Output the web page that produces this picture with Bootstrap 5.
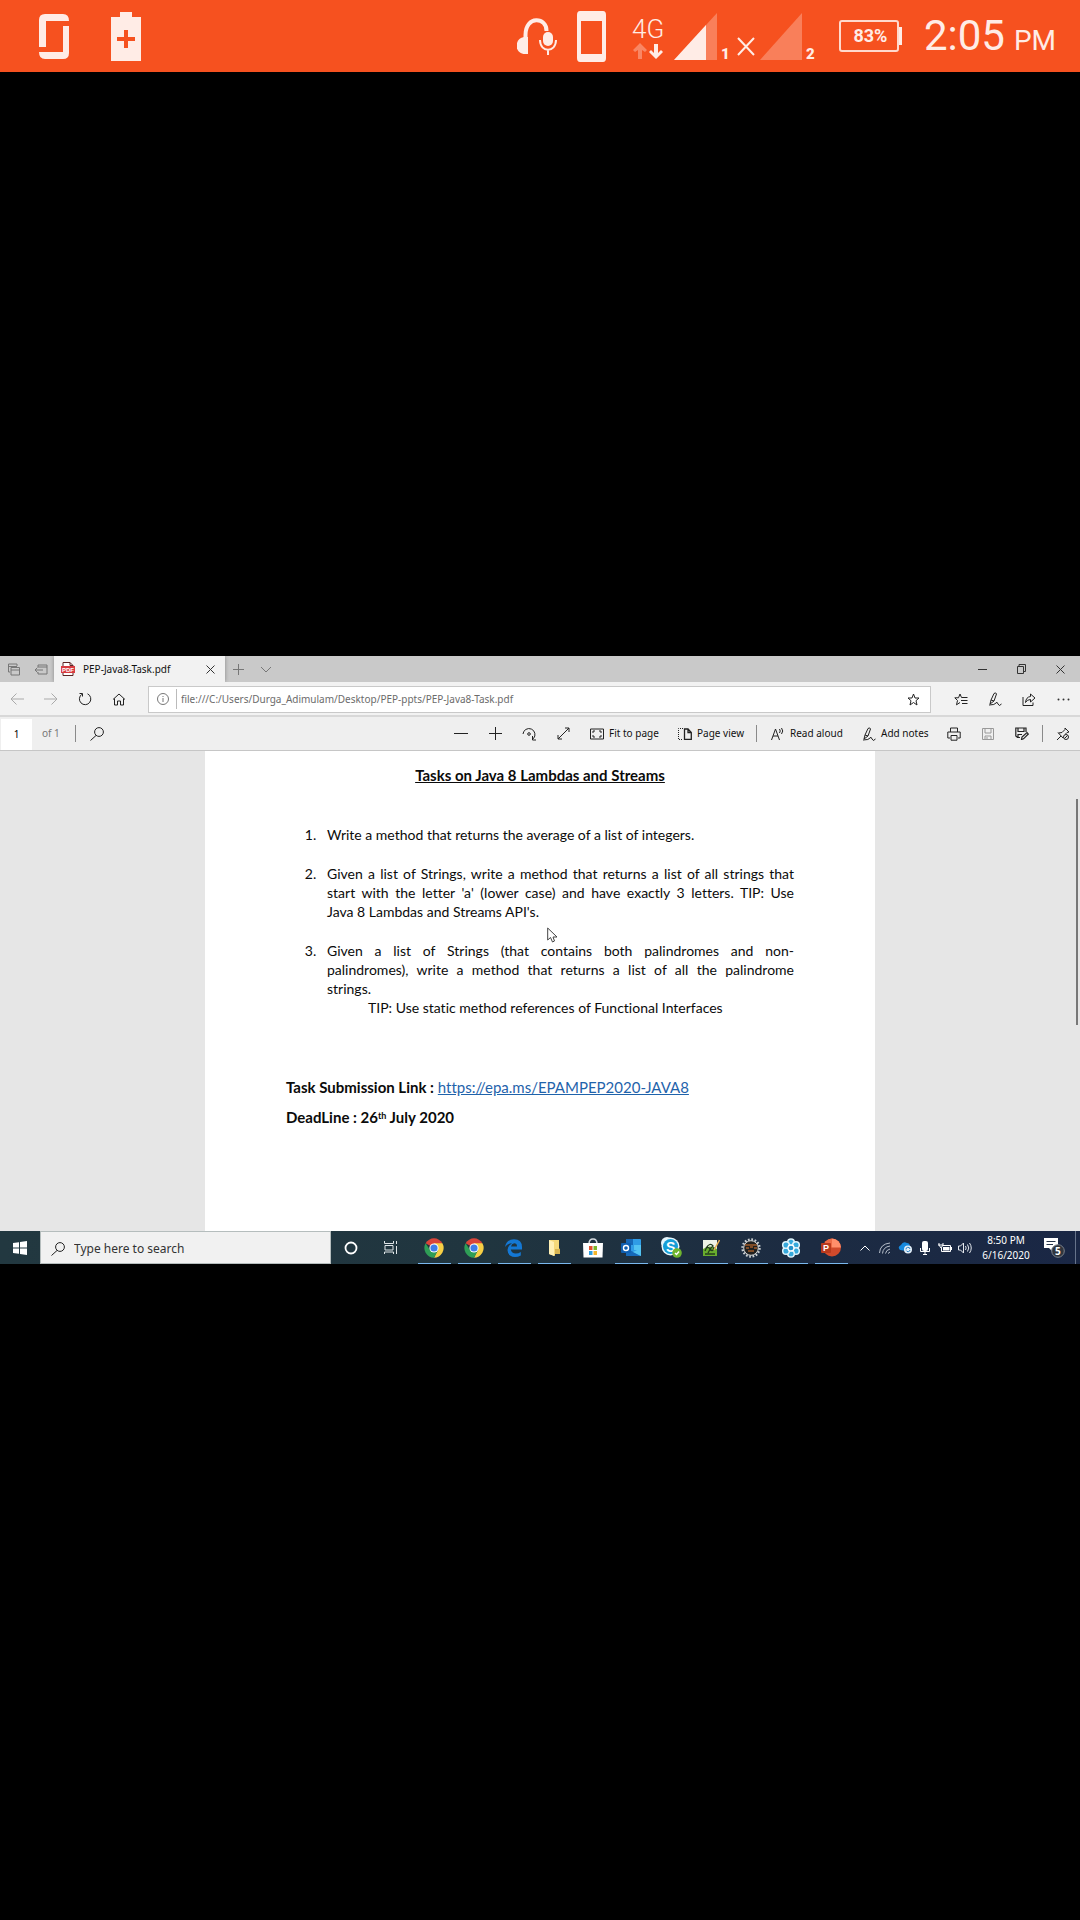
<!DOCTYPE html>
<html lang="en">
<head>
<meta charset="utf-8">
<meta name="viewport" content="width=device-width, initial-scale=1">
<title>PEP-Java8-Task.pdf</title>
<link rel="stylesheet" href="https://cdn.jsdelivr.net/npm/bootstrap@5.3.0/dist/css/bootstrap.min.css">
<style>
body{background:#000;font-family:"Noto Sans","Open Sans",sans-serif;color:#111}
svg{display:block;flex:none}
button{border:0;background:none;padding:0;color:inherit}
.phone-bar{height:72px;background:#f6511f;color:#ffece6;font-family:Roboto,sans-serif;padding:0 24px 0 39px}
.phone-left{gap:42px}
.charge{width:60px;height:32px;border:2px solid #ffd9cc;border-radius:3px;font-size:18px;font-weight:700;line-height:28px;margin-left:23px;padding-left:3px}
.charge-tip{width:3px;height:18px;background:#ffece6;margin-right:22px}
.clock-time{font-size:42px;line-height:50px}
.clock-half{font-size:28px;line-height:40px;margin-left:9px}
.cast{background:#e6e6e6}
.tabs-row{height:26px;background:#c9c9c9;color:#777}
.tile{display:flex;align-items:center;justify-content:center;width:34px;height:100%;flex:none}
.tile-tab{width:27px}
.tile-win{width:39px;color:#333}
.open-tab{width:171px;background:#f2f2f2;color:#111;font-size:10px;padding:0 6px 0 7px;box-shadow:0 0 4px #888;clip-path:inset(0 -4px 0 -4px)}
.nav-row{height:35px;background:#f2f2f2;border-bottom:2px solid #d8d8d8;padding-top:1px}
.url-box{height:27px;background:#fff;border:1px solid #c9c9c9;margin:0 13px 0 12px;color:#777}
.url-box input,.find-box input{border:0;background:none;outline:0;min-width:0;padding:0}
.url-box input{font-size:10px;color:#6b6b6b;padding-left:4px}
.url-rule{width:1px;height:20px;background:#bbb}
.pdf-row{height:34px;background:#efefef;border-bottom:1px solid #c6c6c6;font-size:10px}
.page-no{width:31px;height:31px;border:0;background:#fff;text-align:center;font-size:10px;margin:1px 10px 0 1px;padding:0}
.of-total{font-size:10px;color:#777;width:33px}
.rule{width:1px;height:17px;background:#8a8a8a;flex:none}
.rule-pin{margin:0 3px}
.word-btn{display:flex;align-items:center;gap:5px;height:100%;white-space:nowrap;flex:none}
.w-fit-page{width:88px;margin-left:10px}.w-view{width:78px}.w-read{width:91px;margin-left:14px}.w-notes{width:75px}
.viewer{height:480px;overflow:hidden}
.sheet{max-width:670px;height:100%;background:#fff;padding:14px 81px;font-family:Lato,"Noto Sans",sans-serif;font-size:15px;line-height:19px;color:#0b0b0b;font-variant-ligatures:none}
.sheet h1{font-size:15px;line-height:20px;font-weight:700;text-decoration:underline;margin:0 0 40px}
.sheet ol{padding-left:41px;margin:0;font-size:14px}
.sheet li{margin-bottom:20px;padding:0}
.sheet li::marker{content:counter(list-item) ".\00a0\00a0\00a0"}
.full-line{display:block;text-align:justify;text-align-last:justify}
.tip{padding-left:41px}
.submit-line{margin:61px 0 11px}
.sheet a{color:#1f63ab}
.sheet sup{font-size:9px}
.scroll-thumb{top:48px;right:2px;width:2px;height:226px;background:#777}
.pointer{left:342px;top:176px}
.taskbar{height:33px;background:linear-gradient(90deg,#223840 0%,#20353f 45%,#1c2b42 75%,#1a2745 100%);color:#fff}
.find-box{width:291px;height:33px;background:#f1f1f1;border:1px solid #b5bdbd;padding:2px 0 0 10px;gap:9px;color:#222}
.find-box input{font-size:12px;color:#333}
.find-box input::placeholder{color:#333;opacity:1}
.tile-app{width:40px}
.tile-store{width:37px}
.running{position:relative}
.running::after{content:"";position:absolute;left:4px;right:3px;bottom:0;height:1px;background:#7ab8ee}
.app-group{margin-left:3px}
.tile-tray{width:20px}
.day-clock{width:62px;font-size:10px;line-height:15px}
.tile-note{width:34px}
.peek{width:1px;background:#66738a;margin:0 4px 0 4px}
</style>
<script src="https://cdn.jsdelivr.net/npm/bootstrap@5.3.0/dist/js/bootstrap.bundle.min.js"></script>
</head>
<body class="min-vh-100 d-flex flex-column justify-content-center">

<header class="phone-bar fixed-top d-flex align-items-center justify-content-between">
  <div class="phone-left d-flex align-items-center">
    <svg width="30" height="45" viewBox="0 0 30 45" fill="currentColor"><path d="M0 33V6Q0 0 6 0H24Q30 0 30 7H7V33ZM30 12V39Q30 45 24 45H6Q0 45 0 38H24V12Z"/></svg>
    <svg width="30" height="49" viewBox="0 0 30 49"><path fill="currentColor" d="M9 0H21V5H30V49H0V5H9Z"/><path stroke="#f6511f" stroke-width="4" d="M15 18V36M6 27H24"/></svg>
  </div>
  <div class="d-flex align-items-center">
    <svg width="299" height="52" viewBox="517 13 299 52" fill="currentColor">
      <path fill="none" stroke="currentColor" stroke-width="4" d="M525.500 46V38C525.500 18 547 20 546.500 34"/>
      <path d="M528 40V57H525C514 57 514 41 524 40Z"/>
      <rect x="543" y="35" width="10" height="14" rx="5"/>
      <path fill="none" stroke="currentColor" stroke-width="2" d="M540 43C540 56 556 56 556 43M548 52V58"/>
      <path fill-rule="evenodd" d="M580 14H603Q606 14 606 18V61Q606 65 603 65H580Q577 65 577 61V18Q577 14 580 14ZM581 24V57H602V24Z"/>
      <text x="632" y="41" font-size="26" font-weight="300">4G</text>
      <path opacity=".35" d="M640 46L633 53L635 55L638 53V62H642V53L645 55L647 53Z"/>
      <path d="M656 62L649 55L651 53L654 56V47H658V56L661 53L663 55Z"/>
      <path opacity=".3" d="M717 16V63H674Z"/>
      <path d="M706 28V63H674Z"/>
      <text x="721" y="62" font-size="15" font-weight="900">1</text>
      <path fill="none" stroke="currentColor" stroke-width="2" d="M738 41L754 58M754 41L738 58"/>
      <path opacity=".3" d="M802 16V63H760Z"/>
      <text x="806" y="62" font-size="15" font-weight="900">2</text>
    </svg>
    <div class="charge text-center">83%</div><div class="charge-tip"></div>
    <div class="d-flex align-items-baseline"><span class="clock-time">2:05</span><span class="clock-half">PM</span></div>
  </div>
</header>

<main class="cast">
  <div class="tabs-row d-flex">
    <button class="tile tile-tab" aria-label="Tabs set aside"><svg width="13" height="13" viewBox="0 0 13 13" fill="none" stroke="currentColor"><path d="M3 9H1.500V1H10V3M1.500 3.500H10M4 4.500H12.500V12H4ZM4 7H12.500"/></svg></button>
    <button class="tile tile-tab" aria-label="Set tabs aside"><svg width="14" height="11" viewBox="0 0 14 11" fill="none" stroke="currentColor"><path d="M4 3V1H13V10H4V8M4 3H13M1 6H9M3.500 3.500L1 6L3.500 8.500"/></svg></button>
    <div class="open-tab d-flex align-items-center">
      <svg width="14" height="14" viewBox="0 0 14 14"><path d="M2 .5H9L12 3.500V13.500H2Z" fill="#fff" stroke="#5b2323"/><path d="M9 .5V3.500H12" fill="none" stroke="#5b2323"/><rect y="4" width="14" height="7" fill="#d83b40"/><text x="1" y="10" font-size="6" font-weight="700" fill="#fff" font-family="Liberation Sans">PDF</text></svg>
      <span class="ms-2 me-auto">PEP-Java8-Task.pdf</span>
      <button aria-label="Close tab" class="me-1"><svg width="9" height="9" viewBox="0 0 9 9" stroke="#333"><path d="M.5.5L8.500 8.500M8.500.5L.5 8.500"/></svg></button>
    </div>
    <button class="tile tile-tab" aria-label="New tab"><svg width="11" height="11" viewBox="0 0 11 11" stroke="currentColor"><path d="M5.500 0V11M0 5.500H11"/></svg></button>
    <button class="tile tile-tab me-auto" aria-label="Tab previews"><svg width="12" height="7" viewBox="0 0 12 7" fill="none" stroke="currentColor"><path d="M1 1L6 6L11 1"/></svg></button>
    <button class="tile tile-win" aria-label="Minimise"><svg width="9" height="2" viewBox="0 0 9 2"><path stroke="currentColor" d="M0 1.500H9"/></svg></button>
    <button class="tile tile-win" aria-label="Restore"><svg width="9" height="10" viewBox="0 0 9 10" fill="none" stroke="currentColor"><path d="M.5 2.500H6.500V9.500H.5ZM2 2V.5H8.500V7.500H7"/></svg></button>
    <button class="tile tile-win" aria-label="Close"><svg width="9" height="9" viewBox="0 0 9 9" stroke="currentColor"><path d="M.5.5L8.500 8.500M8.500.5L.5 8.500"/></svg></button>
  </div>

  <nav class="nav-row d-flex align-items-center">
    <button class="tile" aria-label="Back"><svg width="14" height="12" viewBox="0 0 14 12" fill="none" stroke="#aaa"><path d="M14 6H1M6.500.5L1 6L6.500 11.500"/></svg></button>
    <button class="tile" aria-label="Forward"><svg width="14" height="12" viewBox="0 0 14 12" fill="none" stroke="#aaa"><path d="M0 6H13M7.500.5L13 6L7.500 11.500"/></svg></button>
    <button class="tile" aria-label="Refresh"><svg width="14" height="14" viewBox="0 0 14 14" fill="none" stroke="#222"><path d="M9.500 1.800A5.700 5.700 0 1 1 4 2.200M1.500 1.500H4.500V4.500"/></svg></button>
    <button class="tile" aria-label="Home"><svg width="14" height="13" viewBox="0 0 14 13" fill="none" stroke="#222"><path d="M1 6.500L7 1L13 6.500M2.500 5.500V12H5.500V8H8.500V12H11.500V5.500"/></svg></button>
    <div class="url-box d-flex align-items-center flex-fill">
      <span class="tile tile-tab"><svg width="12" height="12" viewBox="0 0 12 12" fill="none" stroke="currentColor"><circle cx="6" cy="6" r="5.500"/><path d="M6 5V9M6 3V4"/></svg></span>
      <span class="url-rule"></span>
      <input class="flex-fill" type="text" aria-label="Address" value="file:///C:/Users/Durga_Adimulam/Desktop/PEP-ppts/PEP-Java8-Task.pdf">
      <button class="tile" aria-label="Add to favourites"><svg width="13" height="13" viewBox="0 0 13 13" fill="none" stroke="#222"><path d="M6.500 1L8 5H12L9 7.700L10 12L6.500 9.500L3 12L4 7.700L1 5H5Z"/></svg></button>
    </div>
    <button class="tile" aria-label="Favourites"><svg width="14" height="13" viewBox="0 0 14 13" fill="none" stroke="#222"><path d="M7.500 4.500L6 1L4.500 4.800H.8L3.500 7.500L2.500 11.800L6 9.500M7.500 4.500H13.500M7 7.500H13.500M8 10.500H13.500"/></svg></button>
    <button class="tile" aria-label="Web notes"><svg width="14" height="14" viewBox="0 0 14 14" fill="none" stroke="#222"><path d="M2 12L3 8L6 1.500Q8 0 8.500 2L6 9L2 12ZM3 8L6 9M1 13Q7 13 8 11T10 12T13.500 12"/></svg></button>
    <button class="tile" aria-label="Share"><svg width="14" height="13" viewBox="0 0 14 13" fill="none" stroke="#222"><path d="M1 4V12.500H11V9.500M8.500 1L13 5L8.500 9V6.500Q5 6.500 3.500 9.500Q4 4 8.500 3.500Z"/></svg></button>
    <button class="tile" aria-label="More"><svg width="13" height="3" viewBox="0 0 13 3" fill="#333"><circle cx="1.500" cy="1.500" r="1"/><circle cx="6.500" cy="1.500" r="1"/><circle cx="11.500" cy="1.500" r="1"/></svg></button>
  </nav>

  <div class="pdf-row d-flex align-items-center">
    <input class="page-no" type="text" aria-label="Page" value="1">
    <span class="of-total">of 1</span>
    <span class="rule"></span>
    <button class="tile ms-1 me-auto" aria-label="Find"><svg width="14" height="14" viewBox="0 0 14 14" fill="none" stroke="#222"><circle cx="9" cy="5" r="4.400"/><path d="M6 8.500L.5 13.500"/></svg></button>
    <button class="tile" aria-label="Zoom out"><svg width="14" height="2" viewBox="0 0 14 2"><path stroke="#222" d="M0 .5H14"/></svg></button>
    <button class="tile" aria-label="Zoom in"><svg width="13" height="13" viewBox="0 0 13 13"><path stroke="#222" d="M6.500 0V13M0 6.500H13"/></svg></button>
    <button class="tile" aria-label="Rotate"><svg width="15" height="14" viewBox="0 0 15 14" fill="none" stroke="#222"><path d="M1 7A6 6 0 1 1 11.500 11.500L10.500 12.500M10.500 9V13H14"/><circle cx="7" cy="7" r="1.300"/></svg></button>
    <button class="tile" aria-label="Full screen"><svg width="13" height="13" viewBox="0 0 13 13" fill="none" stroke="#222"><path d="M1 12L12 1M8 1H12V5M1 8V12H5"/></svg></button>
    <button class="word-btn w-fit-page"><svg width="14" height="12" viewBox="0 0 14 12" fill="none" stroke="#222"><path d="M.5 1H13.500V11H.5Z"/><path d="M3 5V3H5M9 3H11V5M11 7V9H9M5 9H3V7"/></svg>Fit to page</button>
    <button class="word-btn w-view"><svg width="14" height="12" viewBox="0 0 14 12" fill="none" stroke="#222"><path stroke-dasharray="1 1" d="M5 .5H.5V11.500H5"/><path stroke-width="1.300" d="M6.500 1H10L13.300 4.500V11.300H6.500ZM10 1V4.500H13"/></svg>Page view</button>
    <span class="rule"></span>
    <button class="word-btn w-read"><svg width="14" height="14" viewBox="0 0 14 14" fill="none" stroke="#222"><path d="M.5 13L4.500 2L8.500 13M2 9H7M8.500 2Q10 4 8.500 6M10.500 1Q13 4 10.500 7"/></svg>Read aloud</button>
    <button class="word-btn w-notes"><svg width="14" height="14" viewBox="0 0 14 14" fill="none" stroke="#222"><path d="M2 12L3 8L6 1.500Q8 0 8.500 2L6 9L2 12ZM3 8L6 9M1 13Q7 13 8 11T10 12T13.500 12"/></svg>Add notes</button>
    <button class="tile" aria-label="Print"><svg width="14" height="14" viewBox="0 0 14 14" fill="none" stroke="#222"><path d="M3.500 5V1H10.500V5M3 11H.8V5H13.200V11H11M4 8.500H10V13.200H4Z"/></svg></button>
    <button class="tile" aria-label="Save"><svg width="12" height="12" viewBox="0 0 12 12" fill="none" stroke="#999"><path d="M.5.5H11.500V11.500H.5ZM3 .5V5H9V.5M3 11.500V8H9V11.500M5 9V11"/></svg></button>
    <button class="tile" aria-label="Save as"><svg width="14" height="13" viewBox="0 0 14 13" fill="none" stroke="#222" stroke-width="1.200"><path d="M5 10.500H2.500L.8 9V1H11V5M3 1V4.500H9V1M3 10V7.500H7M6.500 12.500L7 10L12 5.500L13.300 7L8.500 11.800Z"/></svg></button>
    <span class="rule rule-pin"></span>
    <button class="tile" aria-label="Unpin toolbar"><svg width="14" height="14" viewBox="0 0 14 14" fill="none" stroke="#222"><path d="M1 13L5 9M2 5.500L7 11M2.500 6L6 5.500L9 2.500V1L13 5L11 5.500L9.500 7"/><circle cx="10" cy="10" r="2.500"/><path d="M8.500 11.500L11.500 8.500"/></svg></button>
  </div>

  <div class="viewer position-relative">
    <article class="sheet mx-auto position-relative">
      <h1 class="text-center">Tasks on Java 8 Lambdas and Streams</h1>
      <ol>
        <li>Write a method that returns the average of a list of integers.</li>
        <li><span class="full-line">Given a list of Strings, write a method that returns a list of all strings that</span> <span class="full-line">start with the letter 'a' (lower case) and have exactly 3 letters. TIP: Use</span> Java 8 Lambdas and Streams API's.</li>
        <li><span class="full-line">Given a list of Strings (that contains both palindromes and non-</span><span class="full-line">palindromes), write a method that returns a list of all the palindrome</span> strings.<div class="tip">TIP: Use static method references of Functional Interfaces</div></li>
      </ol>
      <p class="submit-line"><strong>Task Submission Link :</strong> <a href="https://epa.ms/EPAMPEP2020-JAVA8">https://epa.ms/EPAMPEP2020-JAVA8</a></p>
      <p class="fw-bold">DeadLine : 26<sup>th</sup> July 2020</p>
      <svg class="pointer position-absolute" width="11" height="16" viewBox="0 0 11 16"><path fill="#fff" stroke="#444" d="M.7 1V13L3.500 10.500L5.500 15L7.500 14L6 10H10Z"/></svg>
    </article>
    <div class="scroll-thumb position-absolute"></div>
  </div>

  <footer class="taskbar d-flex align-items-stretch">
    <button class="tile tile-app" aria-label="Start"><svg width="14" height="14" viewBox="0 0 14 14" fill="#fff"><path d="M0 2L6 1.200V6.500H0ZM7 1L14 0V6.500H7ZM0 7.500H6V12.800L0 12ZM7 7.500H14V14L7 13Z"/></svg></button>
    <label class="find-box d-flex align-items-center"><svg width="14" height="14" viewBox="0 0 14 14" fill="none" stroke="currentColor"><circle cx="9" cy="5" r="4.400"/><path d="M6 8.500L.5 13.500"/></svg><input class="flex-fill" type="search" aria-label="Search" placeholder="Type here to search"></label>
    <button class="tile tile-app" aria-label="Cortana"><svg width="14" height="14" viewBox="0 0 14 14" fill="none"><circle cx="7" cy="7" r="5.500" stroke="#fff" stroke-width="1.800"/></svg></button>
    <button class="tile tile-app" aria-label="Task view"><svg width="14" height="13" viewBox="0 0 14 13" fill="none" stroke="#dfe5e7"><path d="M.5 0V2.500H9.500V0M1 4.500H9V9H1ZM.5 13V11H9.500V13M12.500 0V3M12.500 5V13"/></svg></button>
    <div class="app-group d-flex">
      <button class="tile tile-app running" aria-label="Chrome"><svg width="20" height="20" viewBox="0 0 20 20"><path fill="#d9453a" d="M10 10L1.600 5.200A9.700 9.700 0 0 1 18.400 5.200Z"/><path fill="#f7cf45" d="M10 10V5.200H18.400A9.700 9.700 0 0 1 10 19.700L14 12Z"/><path fill="#2f9e56" d="M10 10L10 19.700A9.700 9.700 0 0 1 1.600 5.200L6 12Z"/><path fill="#2f9e56" d="M14 12L10 19.700L8 14Z"/><circle cx="10" cy="10" r="4.600" fill="#fff"/><circle cx="10" cy="10" r="3.600" fill="#3f7ee8"/></svg></button>
      <button class="tile tile-app running" aria-label="Chrome, second window"><svg width="20" height="20" viewBox="0 0 20 20"><path fill="#d9453a" d="M10 10L1.600 5.200A9.700 9.700 0 0 1 18.400 5.200Z"/><path fill="#f7cf45" d="M10 10V5.200H18.400A9.700 9.700 0 0 1 10 19.700L14 12Z"/><path fill="#2f9e56" d="M10 10L10 19.700A9.700 9.700 0 0 1 1.600 5.200L6 12Z"/><path fill="#2f9e56" d="M14 12L10 19.700L8 14Z"/><circle cx="10" cy="10" r="4.600" fill="#fff"/><circle cx="10" cy="10" r="3.600" fill="#3f7ee8"/></svg></button>
      <button class="tile tile-app running" aria-label="Edge"><svg width="18" height="18" viewBox="0 0 18 18"><path fill="#1478d4" d="M0 8Q1.500.3 9 .2Q17 .5 17 8V10.500H5.800Q6.500 14.500 11 14.600Q13.500 14.500 15.800 13V16.500Q13 18 10 18Q2.500 17.500 2.500 11Q2.500 7 7 4.300Q2.500 4.500 0 8ZM6 7.500H12Q12 4.300 9.200 4.300Q6.500 4.600 6 7.500Z"/></svg></button>
      <button class="tile tile-app running" aria-label="File Explorer"><svg width="12" height="17" viewBox="0 0 12 17"><path fill="#f5d97a" d="M1 1H11V9L12 11V15H7V17L1 15Z"/><path fill="#fff0b5" d="M1 1L6 3V17L1 15Z"/><path fill="#d7b452" d="M7 10H12V15H7Z"/></svg></button>
      <button class="tile tile-store" aria-label="Store"><svg width="20" height="20" viewBox="0 0 20 20"><path fill="none" stroke="#d5dbe0" stroke-width="1.500" d="M6 6Q6 1 10 1T14 6"/><path fill="#fff" d="M0 5H20L19.500 19.500H.5Z"/><path fill="#e2512d" d="M6 8H9.500V12H6Z"/><path fill="#7cb82c" d="M10.500 8H14V12H10.500Z"/><path fill="#2e9fe0" d="M6 13H9.500V17H6Z"/><path fill="#f4b52b" d="M10.500 13H14V17H10.500Z"/></svg></button>
      <button class="tile tile-app running" aria-label="Outlook"><svg width="20" height="18" viewBox="0 0 20 18"><rect x="5" width="15" height="17" rx="1" fill="#2f9ce6"/><path fill="#1668b8" d="M5 0H12V6H5ZM5 9L20 17H5Z"/><path fill="#53c3f2" d="M13 6H20V11H13ZM20 9V17L12 13Z"/><rect y="4" width="10" height="10" rx="1" fill="#0f5fb1"/><circle cx="5" cy="9" r="2.500" fill="none" stroke="#fff" stroke-width="1.400"/></svg></button>
      <button class="tile tile-app running" aria-label="Skype for Business"><svg width="21" height="21" viewBox="0 0 21 21"><rect x="0" y="0" width="12" height="12" rx="6" fill="#e8f6fc"/><circle cx="9.500" cy="9.500" r="9" fill="#e8f6fc"/><circle cx="9.500" cy="9.500" r="7.500" fill="#169ed8"/><text x="5" y="14.500" font-size="14" font-weight="700" fill="#fff" font-family="Liberation Sans">S</text><circle cx="16" cy="16" r="4.800" fill="#6fb52e"/><path fill="none" stroke="#fff" stroke-width="1.400" d="M14 16L15.500 17.500L18 14.500"/></svg></button>
      <button class="tile tile-app running" aria-label="Notepad++"><svg width="18" height="18" viewBox="0 0 18 18"><path fill="#eef3e6" d="M1 1H15V17H1Z"/><path fill="#68ad2e" d="M1 10Q8 5 15 10V17H1Z"/><path fill="none" stroke="#233d1c" stroke-width="1.300" d="M3 12Q5 6 8 10T12 8M4 9Q8 3 11 7Q8 9 6 14M3 15H13"/><path fill="none" stroke="#e9b04f" stroke-width="1.500" d="M12 11L17.500 1"/></svg></button>
      <button class="tile tile-app running" aria-label="Gear tool"><svg width="20" height="20" viewBox="0 0 20 20"><circle cx="10" cy="10" r="8.500" fill="none" stroke="#ccd0d2" stroke-width="2.400" stroke-dasharray="1.700 1.640"/><circle cx="10" cy="10" r="7.300" fill="#20201f" stroke="#d2d4d4"/><path stroke="#9f5b2b" stroke-width="1.500" d="M4 7H16M5 10H8M9 9H12M13 10H16M7 13H13"/></svg></button>
      <button class="tile tile-app running" aria-label="Webinar"><svg width="20" height="20" viewBox="0 0 20 20"><g fill="#36a9dc" stroke="#dff4fc" stroke-width="1.500"><circle cx="10" cy="4.200" r="3.300"/><circle cx="15" cy="7" r="3.300"/><circle cx="15" cy="13" r="3.300"/><circle cx="10" cy="15.800" r="3.300"/><circle cx="5" cy="13" r="3.300"/><circle cx="5" cy="7" r="3.300"/></g><circle cx="10" cy="10" r="3" fill="#2391c9" stroke="#fff" stroke-width="1.300"/></svg></button>
      <button class="tile tile-app running" aria-label="PowerPoint"><svg width="20" height="19" viewBox="0 0 20 19"><circle cx="11" cy="9.500" r="9" fill="#d14a2b"/><path fill="#ff8f6b" d="M11 .5A9 9 0 0 1 20 9.500H11Z"/><path fill="#ed6c47" d="M2 9.500A9 9 0 0 1 11 .5V9.500Z"/><rect y="5" width="10" height="10" rx="1" fill="#b93a1d"/><text x="2" y="13" font-size="9" font-weight="700" fill="#fff" font-family="Liberation Sans">P</text></svg></button>
    </div>
    <div class="d-flex ms-auto">
      <button class="tile tile-tray" aria-label="Hidden icons"><svg width="10" height="6" viewBox="0 0 10 6" fill="none" stroke="#fff"><path d="M.5 5.500L5 1L9.500 5.500"/></svg></button>
      <button class="tile tile-tray" aria-label="Network"><svg width="12" height="12" viewBox="0 0 12 12" fill="none" stroke="#b8c0cb"><path d="M.5 11Q1 2 11 1M3.500 11.500Q4 5 11 4M6.500 11.500Q7 8 11 7M9 11.500L11 10"/></svg></button>
      <button class="tile tile-tray" aria-label="OneDrive"><svg width="15" height="13" viewBox="0 0 15 13"><path fill="#1689de" d="M2 9Q-1 6 3 4Q5 0 9 2Q12 2 12 6L8 10Z"/><circle cx="10" cy="8.500" r="4" fill="#e6f1fa"/><path d="M8 8.500A2 2 0 0 1 12 8M12 9A2 2 0 0 1 8.200 9.500" fill="none" stroke="#267ec4"/></svg></button>
      <button class="tile tile-tray" aria-label="Microphone"><svg width="10" height="14" viewBox="0 0 10 14"><rect x="2" width="6" height="10" rx="2" fill="#fff"/><path fill="none" stroke="#fff" d="M.5 7V10.500H9.500V7M5 10V13M3 13.500H7"/></svg></button>
      <button class="tile tile-tray" aria-label="Power"><svg width="14" height="10" viewBox="0 0 14 10" fill="none" stroke="#fff"><path d="M5 2.500H12.500V8.500H3.500V5M0 2H5M1 0V2L3 5L5 2V0M13.500 4V7"/><path fill="#fff" stroke="none" d="M5 4H11.500V7.500H5Z"/></svg></button>
      <button class="tile tile-tray" aria-label="Volume"><svg width="14" height="12" viewBox="0 0 14 12" fill="none" stroke="#e5e9ee"><path d="M.5 4H2.500L5.500 1V11L2.500 8H.5ZM7.500 4Q8.800 6 7.500 8M9.500 2.500Q12 6 9.500 9.500M11.500 1Q15 6 11.500 11"/></svg></button>
    </div>
    <div class="day-clock text-center align-self-center">8:50 PM<br>6/16/2020</div>
    <button class="tile tile-note" aria-label="Notifications"><svg width="21" height="21" viewBox="0 0 21 21"><path fill="#fff" d="M0 1H14V11H8V14L5 11H0Z"/><path stroke="#26354a" d="M2.500 4.500H11.500M2.500 7.500H9"/><circle cx="14" cy="14" r="6.300" fill="#30353d" stroke="#7b828c"/><text x="11" y="18" font-size="10" font-weight="700" fill="#fff">5</text></svg></button>
    <span class="peek"></span>
  </footer>
</main>
</body>
</html>
